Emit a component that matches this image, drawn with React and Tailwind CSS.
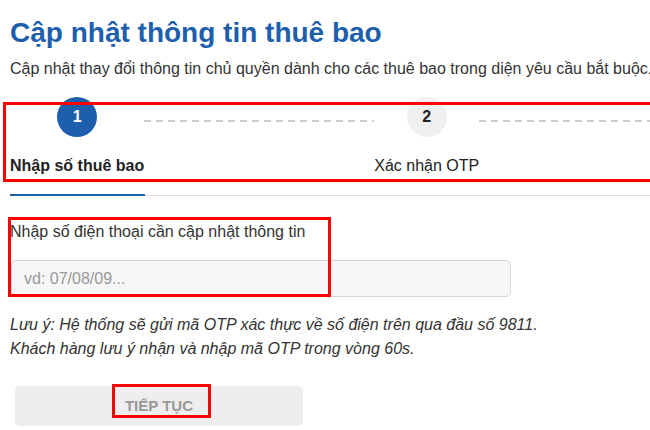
import React from "react";

const Step = ({ num, label, active }) => (
  <div className="flex flex-col items-center shrink-0">
    <div
      className={
        active
          ? "w-10 h-10 rounded-full bg-[#1d5fad] text-white flex items-center justify-center text-[16px] font-bold"
          : "w-10 h-10 rounded-full bg-[#f0f0f0] text-[#222] flex items-center justify-center text-[16px] font-bold"
      }
    >
      {num}
    </div>
    <div
      className={
        active
          ? "mt-[19px] text-[16px] leading-5 font-bold text-[#222] whitespace-nowrap"
          : "mt-[19px] text-[16px] leading-5 text-[#222] whitespace-nowrap"
      }
    >
      {label}
    </div>
  </div>
);

const Dash = () => (
  <div className="w-[230px] shrink-0 h-[2px] mt-[23px] bg-[repeating-linear-gradient(to_right,#cccccc_0_7px,transparent_7px_12px)]" />
);

const App = () => {
  return (
    <div className="relative w-[650px] h-[430px] overflow-hidden bg-white font-['Liberation_Sans',Arial,sans-serif]">
      <div className="w-[1000px] pl-[10px] pt-[17px]">
        <h1 className="text-[28px] leading-[32px] font-bold text-[#1d5fad]">
          Cập nhật thông tin thuê bao
        </h1>
        <p className="mt-[10px] text-[16px] leading-5 text-[#333] whitespace-nowrap">
          Cập nhật thay đổi thông tin chủ quyền dành cho các thuê bao trong diện yêu cầu bắt buộc.
        </p>

        <div className="mt-[18px] flex items-start">
          <Step num="1" label="Nhập số thuê bao" active />
          <Dash />
          <Step num="2" label="Xác nhận OTP" />
          <Dash />
          <Step num="3" label="Cập nhật thông tin" />
        </div>

        <div className="mt-[18px] flex items-center h-[2px]">
          <div className="w-[135px] h-[2px] bg-[#1d5fad]" />
          <div className="flex-1 h-px bg-[#dedede]" />
        </div>

        <div className="mt-[26px] text-[16px] leading-5 text-[#333]">
          Nhập số điện thoại cần cập nhật thông tin
        </div>
        <input
          className="mt-[18px] ml-px block w-[500px] h-[37px] rounded-[5px] border border-[#d3d7dc] bg-[#f6f6f6] px-3 text-[16px] text-[#333] placeholder:text-[#999] outline-none"
          placeholder="vd: 07/08/09..."
        />

        <div className="mt-[16px] italic text-[16px] leading-6 text-[#333]">
          <p>Lưu ý: Hệ thống sẽ gửi mã OTP xác thực về số điện trên qua đầu số 9811.</p>
          <p>Khách hàng lưu ý nhận và nhập mã OTP trong vòng 60s.</p>
        </div>

        <button className="mt-[25px] ml-[5px] w-[288px] h-10 rounded-[5px] bg-[#eeeeee] text-[#999] text-[15px] font-bold">
          TIẾP TỤC
        </button>
      </div>

      <div className="absolute left-[3px] top-[102px] w-[660px] h-[80px] border-[3px] border-[#ff0000]" />
      <div className="absolute left-[8px] top-[217px] w-[323px] h-[80px] border-[3px] border-[#ff0000]" />
      <div className="absolute left-[112px] top-[384px] w-[99px] h-[34px] border-[3px] border-[#ff0000]" />
    </div>
  );
};

export default App;
